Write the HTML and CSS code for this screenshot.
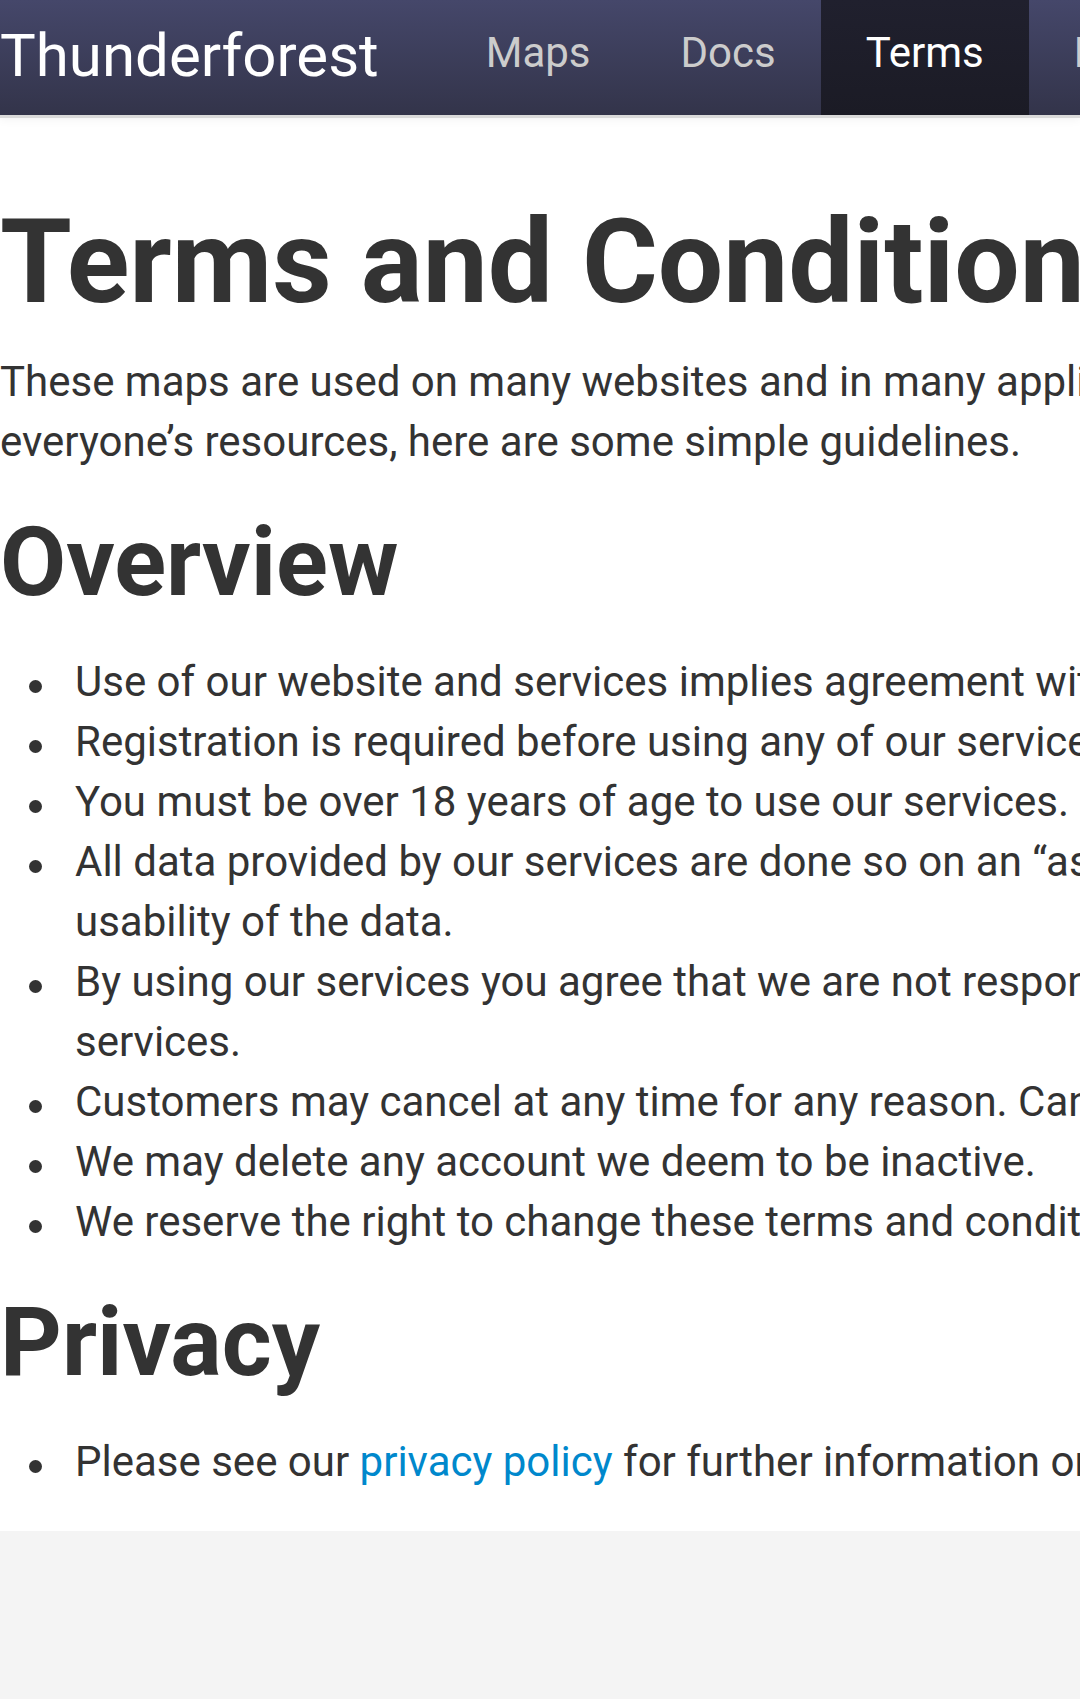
FILE: index.html
```html
<!DOCTYPE html>
<html lang="en">
<head>
    <meta charset="UTF-8">
    <meta name="viewport" content="width=device-width, initial-scale=1.0">
    <title>Terms and Conditions - Thunderforest</title>
    <link rel="stylesheet" href="styles.css">
</head>
<body>
    <div class="navbar">
        <a class="brand" href="#">Thunderforest</a>
        <ul class="nav">
            <li><a href="#">Maps</a></li>
            <li><a href="#">Docs</a></li>
            <li class="active"><a href="#">Terms</a></li>
            <li><a href="#">Pricing</a></li>
            <li><a href="#">Blog</a></li>
            <li><a href="#">Contact</a></li>
        </ul>
    </div>

    <div class="main">
        <div class="container">
            <h1>Terms and Conditions</h1>
            <p>These maps are used on many websites and in many applications. To ensure fair use of everyone’s resources, here are some simple guidelines.</p>

            <h2>Overview</h2>
            <ul class="terms">
                <li>Use of our website and services implies agreement with these terms and conditions.</li>
                <li>Registration is required before using any of our services.</li>
                <li>You must be over 18 years of age to use our services.</li>
                <li>All data provided by our services are done so on an “as is” basis. We can't promise the usability of the data.</li>
                <li>By using our services you agree that we are not responsible for any damage from our services.</li>
                <li>Customers may cancel at any time for any reason. Cancellation is immediate.</li>
                <li>We may delete any account we deem to be inactive.</li>
                <li>We reserve the right to change these terms and conditions at any time.</li>
            </ul>

            <h2>Privacy</h2>
            <ul class="terms">
                <li>Please see our <a href="#">privacy policy</a> for further information on how we handle your data.</li>
            </ul>
        </div>
    </div>

    <div class="footer"></div>
</body>
</html>
```

FILE: styles.css
```css
html, body {
    overflow-x: hidden;
}

body {
    margin: 0;
    font-family: Roboto, "Liberation Sans", Arial, sans-serif;
    font-size: 42px;
    line-height: 60px;
    color: #333;
    background-color: #f4f4f4;
}

a {
    color: #0088cc;
    text-decoration: none;
}

/* top bar */
.navbar {
    position: relative;
    display: flex;
    height: 115px;
    background: linear-gradient(#45476a, #33344a);
    box-shadow: 0 3px 0 #dadada, 0 4px 10px rgba(0, 0, 0, 0.06);
}

.brand {
    flex: none;
    color: #fff;
    font-size: 60px;
    line-height: 111px;
    padding: 0 62px 4px 0;
}

.nav {
    display: flex;
    flex-wrap: nowrap;
    list-style: none;
    margin: 0;
    padding: 0;
}

.nav li a {
    display: block;
    white-space: nowrap;
    font-size: 42px;
    line-height: 60px;
    padding: 23px 45px 32px;
    color: #cccccc;
}

.nav li.active a {
    color: #fff;
    background: linear-gradient(#20202e, #1b1b25);
}

/* page body */
.main {
    background-color: #fff;
    padding: 57px 0 9px;
}

.container {
    width: 1740px;
}

h1, h2 {
    font-weight: 700;
    line-height: 120px;
    margin: 30px 0;
}

h1 {
    font-size: 116px;
}

h2 {
    font-size: 96px;
}

p {
    margin: 0 0 30px;
}

.terms {
    list-style: none;
    margin: 0 0 30px;
    padding-left: 75px;
}

.terms li {
    position: relative;
}

.terms li::before {
    content: "";
    position: absolute;
    left: -46px;
    top: 28px;
    width: 13px;
    height: 13px;
    border-radius: 50%;
    background-color: #333;
}

.footer {
    height: 200px;
}
```
